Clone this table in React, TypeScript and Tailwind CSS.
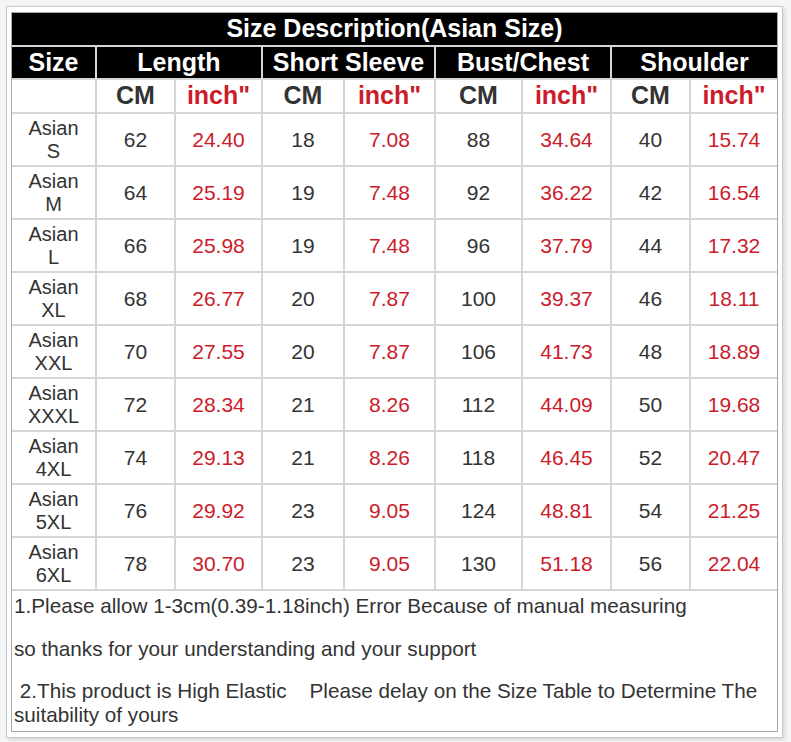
const rows = [
  ["S", "62", "24.40", "18", "7.08", "88", "34.64", "40", "15.74"],
  ["M", "64", "25.19", "19", "7.48", "92", "36.22", "42", "16.54"],
  ["L", "66", "25.98", "19", "7.48", "96", "37.79", "44", "17.32"],
  ["XL", "68", "26.77", "20", "7.87", "100", "39.37", "46", "18.11"],
  ["XXL", "70", "27.55", "20", "7.87", "106", "41.73", "48", "18.89"],
  ["XXXL", "72", "28.34", "21", "8.26", "112", "44.09", "50", "19.68"],
  ["4XL", "74", "29.13", "21", "8.26", "118", "46.45", "52", "20.47"],
  ["5XL", "76", "29.92", "23", "9.05", "124", "48.81", "54", "21.25"],
  ["6XL", "78", "30.70", "23", "9.05", "130", "51.18", "56", "22.04"],
];

const groups = ["Length", "Short Sleeve", "Bust/Chest", "Shoulder"];

export default function App() {
  return (
    <div className="h-[742px] w-[791px] bg-[#f3f5f7] pl-[6px] pt-[6px] font-['Liberation_Sans',Arial,sans-serif]">
      <div className="h-[732px] w-[777px] border border-[#c9c9c9] bg-white pl-[4px] pt-[5px] shadow-[2px_2px_4px_rgba(0,0,0,0.12)]">
        <div className="w-[767px] border border-[#a8a8a8] bg-[#d6d6d6]">
          <div className="grid grid-cols-[83px_77px_85px_80px_89px_85px_87px_77px_86px] grid-rows-[32px_31px_32px_repeat(9,51px)_140px] gap-[2px]">
            <div className="col-span-9 flex items-center justify-center bg-black text-[25px] font-bold text-white">
              Size Description(Asian Size)
            </div>

            <div className="flex items-center justify-center bg-black text-[25px] font-bold text-white">Size</div>
            {groups.map((g) => (
              <div key={g} className="col-span-2 flex items-center justify-center bg-black text-[25px] font-bold text-white">
                {g}
              </div>
            ))}

            <div className="bg-white" />
            {groups.map((g) => (
              <div key={g} className="contents">
                <div className="flex items-center justify-center bg-white text-[25px] font-bold text-[#333]">CM</div>
                <div className="flex items-center justify-center bg-white text-[25px] font-bold text-[#cc1b2b]">inch"</div>
              </div>
            ))}

            {rows.map((r) => (
              <div key={r[0]} className="contents">
                <div className="flex flex-col items-center justify-center bg-white text-[20px] leading-[23px] text-[#333]">
                  <span>Asian</span>
                  <span>{r[0]}</span>
                </div>
                {r.slice(1).map((v, i) => (
                  <div
                    key={i}
                    className={
                      i % 2 === 0
                        ? "flex items-center justify-center bg-white text-[21px] text-[#333]"
                        : "flex items-center justify-center bg-white text-[21px] text-[#cc1b2b]"
                    }
                  >
                    {v}
                  </div>
                ))}
              </div>
            ))}

            <div className="col-span-9 bg-white pl-[2px] pt-[3px] text-[20.7px] leading-[24px] whitespace-pre-wrap text-[#333]">
              <p>1.Please allow 1-3cm(0.39-1.18inch) Error Because of manual measuring</p>
              <p className="mt-[19px]">so thanks for your understanding and your support</p>
              <p className="mt-[18px]"> 2.This product is High Elastic    Please delay on the Size Table to Determine The suitability of yours</p>
            </div>
          </div>
        </div>
      </div>
    </div>
  );
}
